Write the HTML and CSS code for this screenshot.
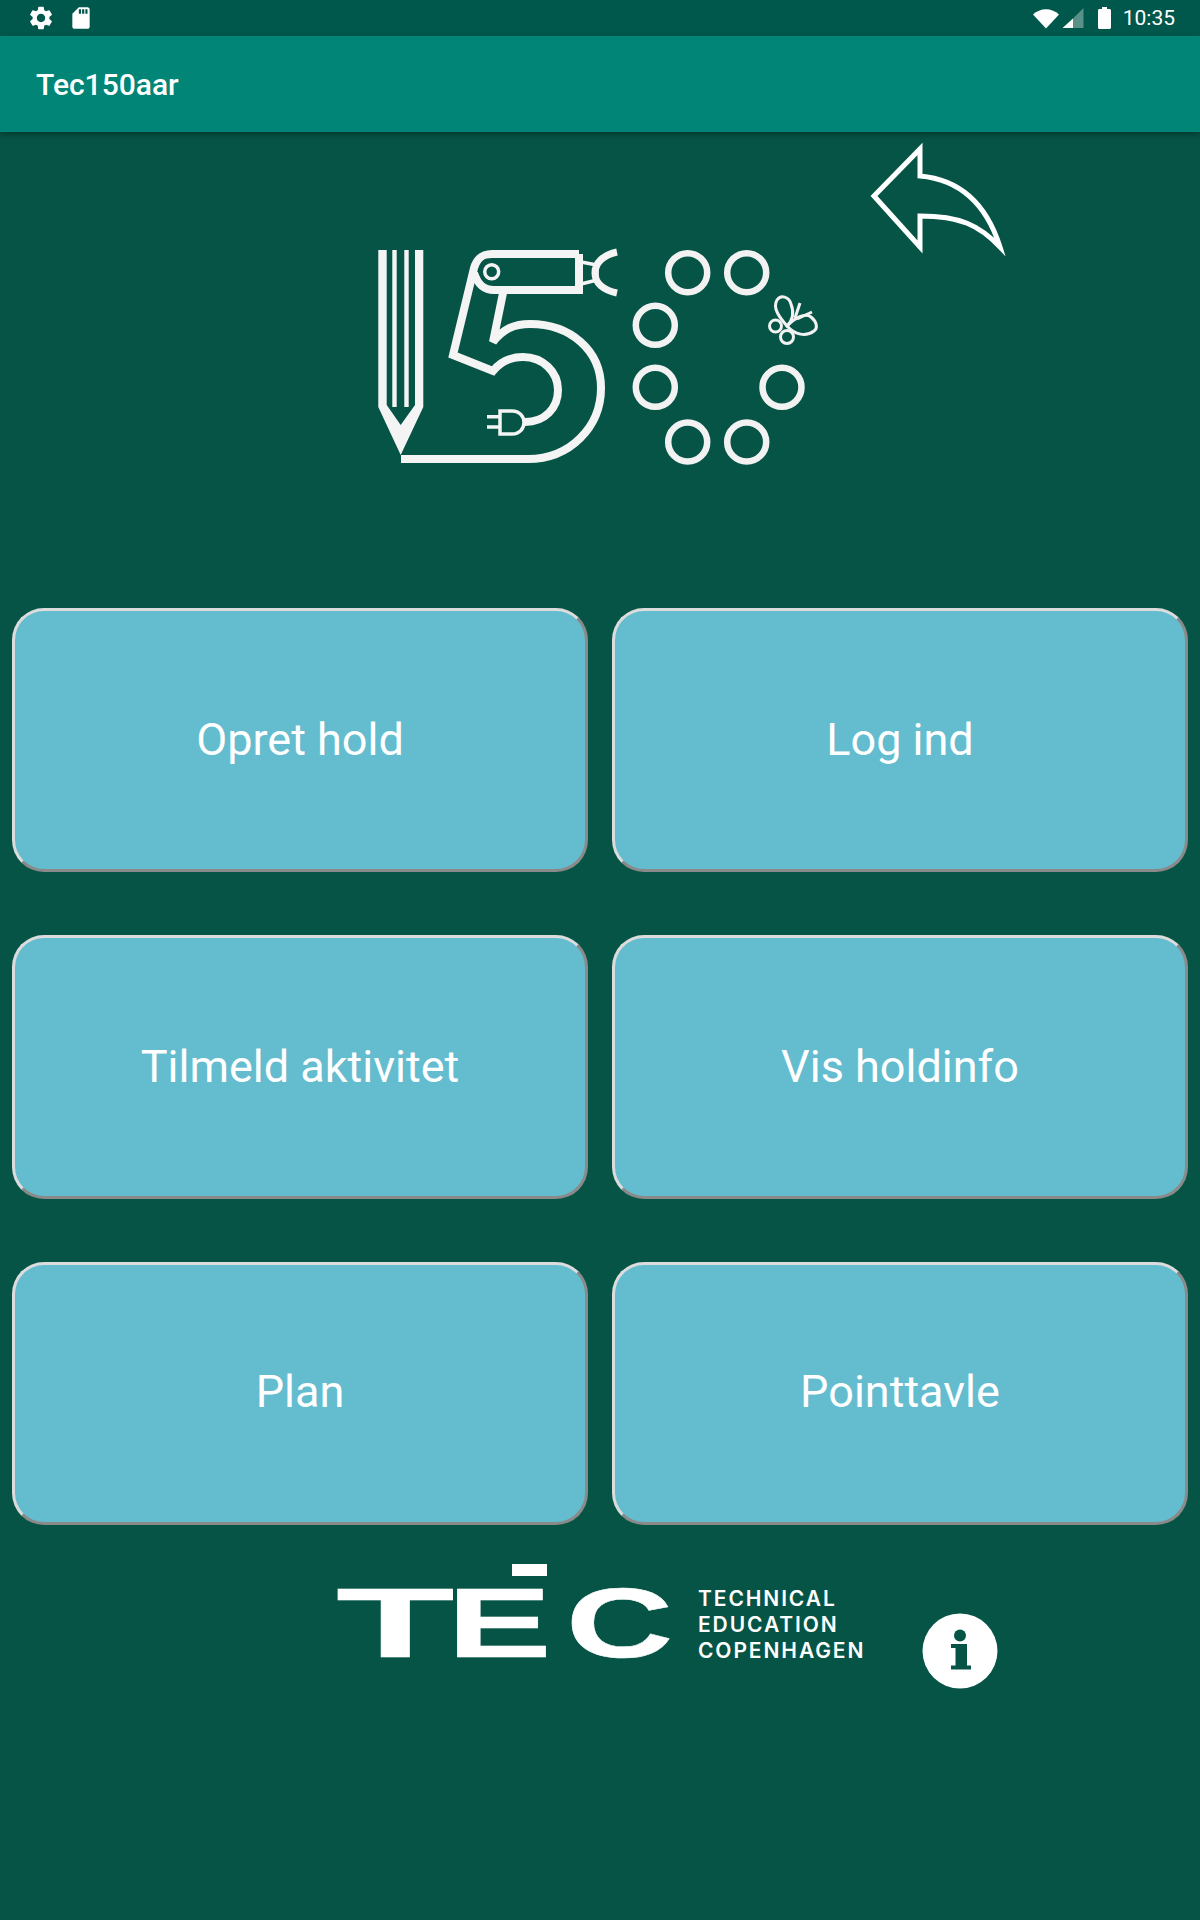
FILE: index.html
```html
<!DOCTYPE html>
<html lang="da">

<head>
    <meta charset="UTF-8">
    <meta name="viewport" content="width=device-width, initial-scale=1.0">
    <title>Tec150aar</title>
    <link rel="stylesheet" href="styles.css">
</head>

<body>

    <div class="statusbar">
        <svg class="icon-gear" viewBox="0 0 24 24">
            <path d="M19.14 12.94c.04-.3.06-.61.06-.94 0-.32-.02-.64-.07-.94l2.03-1.58a.49.49 0 0 0 .12-.61l-1.92-3.32a.488.488 0 0 0-.59-.22l-2.39.96c-.5-.38-1.03-.7-1.62-.94l-.36-2.54a.484.484 0 0 0-.48-.41h-3.84c-.24 0-.43.17-.47.41l-.36 2.54c-.59.24-1.13.57-1.62.94l-2.39-.96c-.22-.08-.47 0-.59.22L2.74 8.87c-.12.21-.08.47.12.61l2.03 1.58c-.05.3-.09.63-.09.94s.02.64.07.94l-2.03 1.58a.49.49 0 0 0-.12.61l1.92 3.32c.12.22.37.29.59.22l2.39-.96c.5.38 1.03.7 1.62.94l.36 2.54c.05.24.24.41.48.41h3.84c.24 0 .44-.17.47-.41l.36-2.54c.59-.24 1.13-.56 1.62-.94l2.39.96c.22.08.47 0 .59-.22l1.92-3.32c.12-.22.07-.47-.12-.61l-2.01-1.58zM12 15.6c-1.98 0-3.6-1.62-3.6-3.6s1.62-3.6 3.6-3.6 3.6 1.62 3.6 3.6-1.62 3.6-3.6 3.6z" />
        </svg>
        <svg class="icon-sd" viewBox="0 0 24 24">
            <path d="M18 2h-8L4.02 8 4 20c0 1.1.9 2 2 2h12c1.1 0 2-.9 2-2V4c0-1.1-.9-2-2-2zm-6 6h-2V4h2v4zm3 0h-2V4h2v4zm3 0h-2V4h2v4z" />
        </svg>
        <div class="status-right">
            <svg class="icon-wifi" viewBox="0 0 26 20">
                <path d="M0 5.5C3.500 2.200 8 .2 13 .2s9.500 2 13 5.300L13 19.500z" />
            </svg>
            <svg class="icon-cell" viewBox="0 0 22 20">
                <path class="cell-dim" d="M21.500 0v20H11V10.500z" />
                <path d="M11 10.500V20H.5z" />
            </svg>
            <svg class="icon-battery" viewBox="0 0 13 22">
                <path d="M4 0h5v2h2.500c.8 0 1.500.7 1.500 1.500v17c0 .8-.7 1.500-1.500 1.500h-10C.7 22 0 21.300 0 20.500v-17C0 2.700.7 2 1.500 2H4z" />
            </svg>
            <span class="clock">10:35</span>
        </div>
    </div>

    <div class="appbar">Tec150aar</div>

    <div class="hero">
        <!-- viewBox is in page coordinates, easier to compare -->
        <svg class="logo" viewBox="370 240 460 230">
            <path class="fill" d="M378.300 250H386.700V405L400.700 425 415 405V250H423.300V407L400.700 455 378.300 407Z" />
            <path class="fill" d="M392.300 250H396.700V407H392.300ZM404.300 250H408.700V407H404.300Z" />

            <g class="line">
                <path d="M401 459H528C570 459 601 427 601 388 601 350 570 324 530 324 514 324 503 329 493 342L503 293" />
                <path d="M579 254H492C482 254 477 258 474 268L453 355 493 371C501 361 510 357 523 357 543 357 558 372 558 390 558 408 545 422 525 422" />
                <path d="M474 273C478 285 484 290 494 290H579V254" />
            </g>
            <circle class="thin" cx="491.700" cy="271.700" r="7" />

            <g class="thin">
                <path d="M581 262L597 265M581 284L597 280M597 265V280" />
                <path class="claw" d="M617 252C603 255 595 263 595 273 595 283 603 290 617 293" />
                <path d="M500 411H512C520 411 524 417 524 422.500 524 428 520 434 512 434H500ZM487 416.700H500M487 427H500" />
            </g>

            <g class="ring">
                <circle cx="687.700" cy="272.700" r="19.500" />
                <circle cx="746.700" cy="272.700" r="19.500" />
                <circle cx="655.300" cy="325.300" r="19.500" />
                <circle cx="655.300" cy="387.300" r="19.500" />
                <circle cx="782" cy="387.300" r="19.500" />
                <circle cx="687.700" cy="442" r="19.500" />
                <circle cx="746.700" cy="442" r="19.500" />
            </g>

            <g class="butterfly">
                <path d="M787 326C780 318 772 308 777 300 781 294 789 297 791 304 794 312 793 320 787 326Z" />
                <path d="M787 326C795 318 805 312 811 317 817 322 818 328 814 331 806 337 795 335 787 326Z" />
                <circle cx="775.500" cy="326" r="6" />
                <circle cx="787" cy="337" r="6.500" />
                <path d="M795 318L800 303M797 319L812 312" />
            </g>
        </svg>

        <svg class="back" viewBox="865 140 145 120">
            <path d="M874 196L920 149V176C965 180 988 209 1000 247 979 225 960 216 920 216V247Z" />
        </svg>
    </div>

    <div class="menu">
        <button class="menu-btn">Opret hold</button>
        <button class="menu-btn">Log ind</button>
        <button class="menu-btn">Tilmeld aktivitet</button>
        <button class="menu-btn">Vis holdinfo</button>
        <button class="menu-btn last-row">Plan</button>
        <button class="menu-btn last-row">Pointtavle</button>
    </div>

    <div class="footer">
        <div class="tec">
            <span class="tec-t">T</span><span class="tec-e">E</span><span class="tec-c">C</span>
        </div>
        <div class="tagline">TECHNICAL<br>EDUCATION<br>COPENHAGEN</div>
        <svg class="info" viewBox="0 0 76 76">
            <circle class="info-bg" cx="38" cy="38" r="37.500" />
            <circle cx="38" cy="22.500" r="6" />
            <path d="M29 31H45V52.500H49V56.500H29V52.500H33.500V35H29Z" />
        </svg>
    </div>

</body>

</html>
```

FILE: styles.css
```css
body {
    margin: 0;
    width: 1200px;
    height: 1920px;
    overflow: hidden;
    background-color: #065446;
    font-family: Roboto, "Liberation Sans", sans-serif;
    color: #fff;
}

.statusbar {
    display: flex;
    align-items: center;
    height: 36px;
    padding: 0 25px 0 27px;
    background-color: #00574b;
}

.statusbar svg {
    display: block;
    fill: #fff;
}

.icon-gear {
    width: 28px;
    height: 28px;
}

.icon-sd {
    width: 26px;
    height: 26px;
    margin-left: 13px;
}

.status-right {
    display: flex;
    align-items: center;
    margin-left: auto;
}

.icon-wifi {
    width: 26px;
    height: 20px;
    margin-top: 1px;
}

.icon-cell {
    width: 22px;
    height: 20px;
    margin-left: 3px;
}

.cell-dim {
    opacity: 0.35;
}

.icon-battery {
    width: 13px;
    height: 22px;
    margin-left: 14px;
}

.clock {
    margin-left: 12px;
    font-size: 21px;
    line-height: 36px;
}

.appbar {
    position: relative;
    height: 96px;
    padding-left: 36px;
    background-color: #008577;
    box-shadow: 0 3px 6px rgba(0, 0, 0, 0.3);
    font-size: 30px;
    font-weight: 500;
    line-height: 98px;
}

.hero {
    display: flex;
    align-items: flex-start;
    height: 476px;
    padding-left: 370px;
}

.logo {
    display: block;
    width: 460px;
    height: 230px;
    margin-top: 108px;
}

.fill {
    fill: #f4f4f4;
}

.line path {
    fill: none;
    stroke: #f4f4f4;
    stroke-width: 8;
}

.thin,
.thin path {
    fill: none;
    stroke: #f4f4f4;
    stroke-width: 3.500;
}

.thin .claw {
    stroke-width: 7;
}

.ring circle {
    fill: none;
    stroke: #f2f2f2;
    stroke-width: 6.500;
}

.butterfly path,
.butterfly circle {
    fill: none;
    stroke: #f2f2f2;
    stroke-width: 3;
}

.back {
    display: block;
    width: 145px;
    height: 120px;
    margin-top: 8px;
    margin-left: 35px;
}

.back path {
    fill: none;
    stroke: #fff;
    stroke-width: 5;
    stroke-miterlimit: 10;
}

.menu {
    display: grid;
    grid-template-columns: 576px 576px;
    grid-template-rows: 264px 264px 263px;
    column-gap: 24px;
    row-gap: 63px;
    padding: 0 12px;
}

.menu-btn {
    padding: 0 0 2px;
    border: 3px solid;
    border-color: #dcdcdc #8a8a8a #8a8a8a #dcdcdc;
    border-radius: 32px;
    background-color: #64bccf;
    color: #fff;
    font-family: Roboto, "Liberation Sans", sans-serif;
    font-size: 45px;
}

.last-row {
    padding-bottom: 4px;
}

.footer {
    display: flex;
    align-items: flex-start;
    padding: 39px 0 0 337px;
}

.tec {
    display: flex;
    width: 332px;
    height: 94px;
    position: relative;
    font-family: "Liberation Sans", sans-serif;
    font-size: 98px;
    font-weight: 700;
    line-height: 98px;
    -webkit-text-stroke: 0.5px #fff;
}

/* the accent bar on the E */
.tec::after {
    content: "";
    position: absolute;
    left: 175px;
    top: 0;
    width: 35px;
    height: 12px;
    background-color: #fff;
}

.tec span {
    display: block;
    height: 98px;
    margin-top: 10px;
    transform-origin: left top;
}

.tec-t {
    width: 111px;
    margin-left: -1px;
    transform: scaleX(1.980);
}

.tec-e {
    width: 119px;
    transform: scaleX(1.600);
}

.tec-c {
    transform: scaleX(1.515);
}

.tagline {
    flex: none;
    width: 180px;
    margin-top: 22px;
    margin-left: 29px;
    font-family: Inter, "Liberation Sans", sans-serif;
    font-size: 21px;
    font-weight: 600;
    letter-spacing: 1.900px;
    line-height: 26px;
}

.info {
    display: block;
    width: 76px;
    height: 76px;
    margin-top: 49px;
    margin-left: 44px;
    fill: #065446;
}

.info-bg {
    fill: #fff;
}
```
